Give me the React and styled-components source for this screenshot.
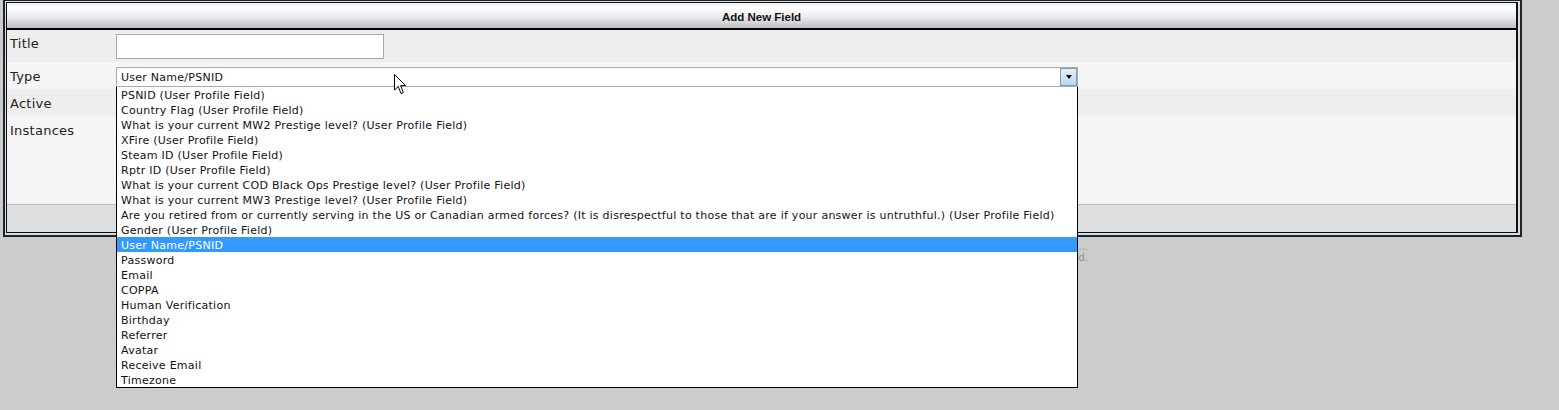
import React from 'react';
import styled, { createGlobalStyle } from 'styled-components';

// Page
// ==========================================================================

const Global = createGlobalStyle`
  html, body {
    margin: 0;
    padding: 0;
    background: #cccccc;
    font-family: 'DejaVu Sans', Verdana, sans-serif;
  }
`;

const Page = styled.div`
  position: relative;
  min-height: 411px;
  padding: 0 0 0 3px;
  margin-top: -1px;
`;

// Frame
// ==========================================================================

const Frame = styled.div`
  width: 1512px;
  border: 2px solid #1a252e;
  padding: 1px 2px 2px 1px;
  background: #d9dde0;
`;

const Inner = styled.div`
  border-style: solid;
  border-color: #0c1116;
  border-width: 1px 2px 1px 1px;
  background: #f5f5f5;
`;

const Header = styled.div`
  box-sizing: border-box;
  height: 27px;
  padding-top: 2px;
  border-bottom: 2px solid #000;
  background: linear-gradient(#ececec 0%, #ffffff 18%, #ececef 55%, #bdbec6 100%);
  display: flex;
  align-items: center;
  justify-content: center;
  font-family: 'Liberation Sans', Arial, sans-serif;
  font-size: 11.5px;
  font-weight: bold;
  color: #111;
`;

const Row = styled.div`
  display: grid;
  grid-template-columns: 109px 1fr;
  align-items: start;
  height: ${p => p.$height}px;
  background: ${p => (p.$alt ? '#f5f5f5' : '#eeeeee')};
`;

const Label = styled.div`
  padding: ${p => p.$top || 7}px 0 0 3px;
  line-height: 16px;
  font-size: 13px;
  letter-spacing: 0.25px;
  color: #222;
`;

const Field = styled.div`
  padding-top: ${p => p.$top || 5}px;
`;

const Footer = styled.div`
  height: 27px;
  border-top: 1px solid #bbbbbb;
  background: #dcdee0;
`;

// Inputs
// ==========================================================================

const TextInput = styled.input`
  box-sizing: border-box;
  display: block;
  width: 268px;
  height: 25px;
  margin: 0;
  border: 1px solid #a9a9a9;
  background: #fff;
  outline: none;
`;

const SelectWrap = styled.div`
  position: relative;
  width: 962px;
`;

const SelectBox = styled.div`
  box-sizing: border-box;
  height: 20px;
  border: 1px solid #a5acb2;
  background: #fff;
  display: flex;
  align-items: center;
  padding-left: 4px;
  font-size: 11px;
  letter-spacing: 0.26px;
  color: #111;
`;

const SelectText = styled.span`
  flex: 1;
`;

const ArrowButton = styled.span`
  box-sizing: border-box;
  width: 17px;
  height: 18px;
  border: 1px solid #7f9db9;
  background: linear-gradient(#e6f0f9, #bcd6ee);
  display: flex;
  align-items: center;
  justify-content: center;
`;

const Arrow = styled.span`
  width: 0;
  height: 0;
  border-left: 3.5px solid transparent;
  border-right: 3.5px solid transparent;
  border-top: 4px solid #000;
`;

const List = styled.ul`
  position: absolute;
  z-index: 5;
  top: 20px;
  left: 0;
  box-sizing: border-box;
  width: 962px;
  margin: 0;
  padding: 0;
  list-style: none;
  border: 1px solid #000;
  border-top: none;
  background: #fff;
`;

const Option = styled.li`
  box-sizing: border-box;
  height: 15px;
  padding: 1px 0 0 4px;
  line-height: 16px;
  font-size: 11px;
  letter-spacing: 0.26px;
  white-space: nowrap;
  color: ${p => (p.$selected ? '#fff' : '#111')};
  background: ${p => (p.$selected ? '#3399ff' : 'transparent')};
`;

// Misc.
// ==========================================================================

const Note = styled.div`
  width: 1085px;
  padding-top: 4px;
  text-align: right;
  font-size: 10px;
  line-height: 11px;
  color: #8c8c8c;
`;

const Cursor = styled.svg`
  position: absolute;
  z-index: 10;
  left: 394px;
  top: 75px;
`;

const options = [
  'PSNID (User Profile Field)',
  'Country Flag (User Profile Field)',
  'What is your current MW2 Prestige level? (User Profile Field)',
  'XFire (User Profile Field)',
  'Steam ID (User Profile Field)',
  'Rptr ID (User Profile Field)',
  'What is your current COD Black Ops Prestige level? (User Profile Field)',
  'What is your current MW3 Prestige level? (User Profile Field)',
  'Are you retired from or currently serving in the US or Canadian armed forces? (It is disrespectful to those that are if your answer is untruthful.) (User Profile Field)',
  'Gender (User Profile Field)',
  'User Name/PSNID',
  'Password',
  'Email',
  'COPPA',
  'Human Verification',
  'Birthday',
  'Referrer',
  'Avatar',
  'Receive Email',
  'Timezone',
];

const selected = 'User Name/PSNID';

export default function App() {
  return (
    <Page>
      <Global />
      <Frame>
        <Inner>
          <Header>Add New Field</Header>
          <Row $height={32}>
            <Label $top={6}>Title</Label>
            <Field $top={4}>
              <TextInput type="text" />
            </Field>
          </Row>
          <Row $height={27} $alt>
            <Label>Type</Label>
            <Field>
              <SelectWrap>
                <SelectBox>
                  <SelectText>{selected}</SelectText>
                  <ArrowButton>
                    <Arrow />
                  </ArrowButton>
                </SelectBox>
                <List>
                  {options.map(o => (
                    <Option key={o} $selected={o === selected}>
                      {o}
                    </Option>
                  ))}
                </List>
              </SelectWrap>
            </Field>
          </Row>
          <Row $height={27}>
            <Label>Active</Label>
          </Row>
          <Row $height={88} $alt>
            <Label>Instances</Label>
          </Row>
          <Footer />
        </Inner>
      </Frame>
      <Note>
        Fields marked with an asterisk must be filled in before saving ...
        <br />
        Custom fields are shown on the registration form once they are activated.
      </Note>
      <Cursor width="13" height="21" viewBox="0 0 13 21">
        <path
          d="M0.5 0.5 L0.5 16 L4.2 12.4 L7 19.5 L9.3 18.5 L6.6 11.6 L11.6 11.6 Z"
          fill="#fff"
          stroke="#000"
          strokeWidth="1"
          strokeLinejoin="miter"
        />
      </Cursor>
    </Page>
  );
}
